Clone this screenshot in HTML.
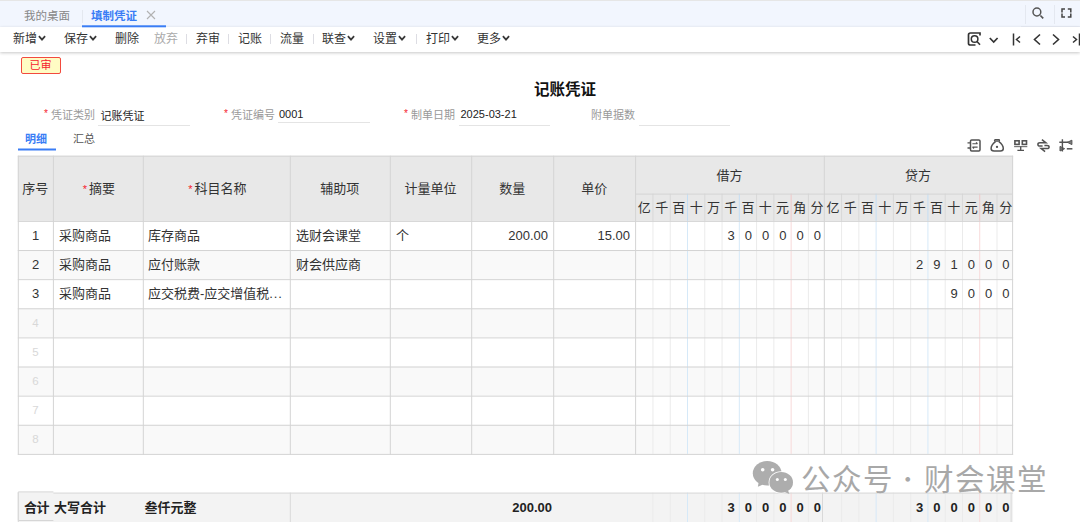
<!DOCTYPE html>
<html lang="zh-CN"><head><meta charset="utf-8"><title>填制凭证</title>
<style>
html,body{margin:0;padding:0;}
body{width:1080px;height:522px;overflow:hidden;position:relative;background:#fff;font-family:"Liberation Sans","Noto Sans CJK SC",sans-serif;color:#333;font-size:12px;}
.abs{position:absolute;white-space:nowrap;line-height:1;}
#tabbar{position:absolute;left:0;top:0;width:1080px;height:27px;background:#f2f6fe;}
#toolbar{position:absolute;left:0;top:27px;width:1080px;height:25px;background:#fff;box-shadow:0 1px 3px rgba(0,0,0,.22);}
.tb{position:absolute;top:33px;font-size:12px;line-height:13px;color:#333;white-space:nowrap;}
.sep{position:absolute;top:34px;width:1px;height:10px;background:#dddde3;}
.lbl{position:absolute;font-size:11px;line-height:12px;color:#999;white-space:nowrap;}
.val{position:absolute;font-size:11px;line-height:12px;color:#222;white-space:nowrap;}
.ul{position:absolute;height:1px;background:#e4e4e4;}
.red{color:#f5222d;}
#grid{position:absolute;left:0;top:0;}
.th{position:absolute;font-size:13px;line-height:14px;color:#333;text-align:center;white-space:nowrap;}
.td{position:absolute;font-size:13px;line-height:14px;color:#333;white-space:nowrap;}
.dg{position:absolute;font-size:13px;line-height:14px;color:#333;text-align:center;white-space:nowrap;}
.tot{font-weight:bold;color:#222;}
</style></head><body>

<div id="tabbar"></div>
<div class="abs" style="left:0;top:0;width:1080px;height:1px;background:#e6e6e6"></div>
<div class="abs" style="left:24px;top:9.5px;font-size:11.5px;line-height:13px;color:#888;">我的桌面</div>
<div class="abs" style="left:82px;top:10px;width:1px;height:13px;background:#e4e8ef;"></div>
<div class="abs" style="left:91px;top:9.5px;font-size:11.5px;line-height:13px;color:#3a7df5;font-weight:bold;">填制凭证</div>
<svg class="abs" style="left:146px;top:10px" width="10" height="10" viewBox="0 0 10 10"><path d="M1 1 L9 9 M9 1 L1 9" stroke="#b2b2b2" stroke-width="1.1" fill="none"/></svg>
<svg class="abs" style="left:82px;top:24px;z-index:3" width="84" height="4"><rect x="0" y="1.3" width="84" height="2" fill="#3a7df5"/></svg>
<div class="abs" style="left:1025px;top:5px;width:1px;height:19px;background:#e4e8f0;"></div>
<div class="abs" style="left:1054px;top:5px;width:1px;height:19px;background:#e4e8f0;"></div>
<div class="abs" style="left:1021px;top:26px;width:59px;height:1px;background:#e9edf6;"></div>
<svg class="abs" style="left:1031px;top:6px" width="14" height="14" viewBox="0 0 14 14"><circle cx="5.9" cy="6" r="3.9" stroke="#555" stroke-width="1.5" fill="none"/><path d="M9.4 9.5 L12.2 12.3" stroke="#555" stroke-width="1.7"/></svg>
<svg class="abs" style="left:1060px;top:7px" width="13" height="12" viewBox="0 0 13 12"><path d="M5 1.9 H2 V5.4 M2 6.5 V10 H5 M7.8 1.9 H10.8 V5.4 M10.8 6.5 V10 H7.8" stroke="#444" stroke-width="1.5" fill="none"/></svg>
<div id="toolbar"></div>
<div class="tb" style="left:13px;color:#333">新增</div>
<svg class="abs" style="left:38px;top:34.6px" width="8" height="7" viewBox="0 0 8 7"><path d="M0.9 1.2 L4 4.6 L7.1 1.2" stroke="#383838" stroke-width="1.75" fill="none"/></svg>
<div class="tb" style="left:64px;color:#333">保存</div>
<svg class="abs" style="left:89px;top:34.6px" width="8" height="7" viewBox="0 0 8 7"><path d="M0.9 1.2 L4 4.6 L7.1 1.2" stroke="#383838" stroke-width="1.75" fill="none"/></svg>
<div class="tb" style="left:115px;color:#333">删除</div>
<div class="tb" style="left:154px;color:#aaa">放弃</div>
<div class="tb" style="left:196px;color:#333">弃审</div>
<div class="tb" style="left:238px;color:#333">记账</div>
<div class="tb" style="left:280px;color:#333">流量</div>
<div class="tb" style="left:322px;color:#333">联查</div>
<svg class="abs" style="left:347px;top:34.6px" width="8" height="7" viewBox="0 0 8 7"><path d="M0.9 1.2 L4 4.6 L7.1 1.2" stroke="#383838" stroke-width="1.75" fill="none"/></svg>
<div class="tb" style="left:373px;color:#333">设置</div>
<svg class="abs" style="left:398px;top:34.6px" width="8" height="7" viewBox="0 0 8 7"><path d="M0.9 1.2 L4 4.6 L7.1 1.2" stroke="#383838" stroke-width="1.75" fill="none"/></svg>
<div class="tb" style="left:426px;color:#333">打印</div>
<svg class="abs" style="left:451px;top:34.6px" width="8" height="7" viewBox="0 0 8 7"><path d="M0.9 1.2 L4 4.6 L7.1 1.2" stroke="#383838" stroke-width="1.75" fill="none"/></svg>
<div class="tb" style="left:477px;color:#333">更多</div>
<svg class="abs" style="left:502px;top:34.6px" width="8" height="7" viewBox="0 0 8 7"><path d="M0.9 1.2 L4 4.6 L7.1 1.2" stroke="#383838" stroke-width="1.75" fill="none"/></svg>
<div class="sep" style="left:186px"></div>
<div class="sep" style="left:228px"></div>
<div class="sep" style="left:270px"></div>
<div class="sep" style="left:313px"></div>
<div class="sep" style="left:416px"></div>
<svg class="abs" style="left:967px;top:31px" width="15" height="16" viewBox="0 0 15 16"><path d="M13 4.6 V2 H3.5 Q1.5 2 1.5 4 V12.5 Q1.5 14 3.5 14 H8.5" stroke="#333" stroke-width="1.7" fill="none"/><circle cx="7.6" cy="8" r="3.3" stroke="#333" stroke-width="1.5" fill="none"/><path d="M10 10.5 L13 13.8" stroke="#333" stroke-width="1.6"/></svg>
<svg class="abs" style="left:989px;top:36.5px" width="10" height="7" viewBox="0 0 10 7"><path d="M0.8 1 L4.7 5 L8.6 1" stroke="#333" stroke-width="1.7" fill="none"/></svg>
<svg class="abs" style="left:1012px;top:33px" width="10" height="13" viewBox="0 0 10 13"><path d="M1.5 0.5 V12.5" stroke="#333" stroke-width="1.5"/><path d="M8 3.5 L4.5 6.5 L8 9.5" stroke="#333" stroke-width="1.5" fill="none"/></svg>
<svg class="abs" style="left:1032px;top:33px" width="10" height="13" viewBox="0 0 10 13"><path d="M8 1.5 L2.5 6.5 L8 11.5" stroke="#333" stroke-width="1.6" fill="none"/></svg>
<svg class="abs" style="left:1051px;top:33px" width="10" height="13" viewBox="0 0 10 13"><path d="M2 1.5 L7.5 6.5 L2 11.5" stroke="#333" stroke-width="1.6" fill="none"/></svg>
<svg class="abs" style="left:1070.5px;top:33px" width="10" height="13" viewBox="0 0 10 13"><path d="M2 3.5 L5.5 6.5 L2 9.5" stroke="#333" stroke-width="1.5" fill="none"/><path d="M8.5 0.5 V12.5" stroke="#333" stroke-width="1.5"/></svg>
<div class="abs" style="left:21px;top:57px;width:38px;height:15px;border:1px solid #f24a3e;border-radius:2px;background:#fffcc4;color:#f5222d;font-size:11px;line-height:15px;text-align:center;text-indent:-1px">已审</div>
<div class="abs" style="left:465px;top:81.6px;width:200px;text-align:center;font-size:15.5px;line-height:16px;font-weight:bold;color:#111;">记账凭证</div>
<div class="lbl red" style="left:44px;top:108px;font-size:10px">*</div>
<div class="lbl" style="left:51px;top:108.5px">凭证类别</div>
<div class="val" style="left:100.5px;top:109.5px">记账凭证</div>
<div class="ul" style="left:98px;top:125px;width:92px"></div>
<div class="lbl red" style="left:224px;top:108px;font-size:10px">*</div>
<div class="lbl" style="left:231px;top:108.5px">凭证编号</div>
<div class="val" style="left:279px;top:107.6px">0001</div>
<div class="ul" style="left:278px;top:122px;width:92px"></div>
<div class="lbl red" style="left:404px;top:108px;font-size:10px">*</div>
<div class="lbl" style="left:411px;top:108.5px">制单日期</div>
<div class="val" style="left:460.5px;top:108px">2025-03-21</div>
<div class="ul" style="left:459px;top:125px;width:91px"></div>
<div class="lbl" style="left:591px;top:108.5px">附单据数</div>
<div class="ul" style="left:639px;top:125px;width:91px"></div>
<div class="abs" style="left:25px;top:132.5px;font-size:11px;line-height:12px;color:#3a7df5;font-weight:bold;">明细</div>
<div class="abs" style="left:73px;top:132.5px;font-size:11px;line-height:12px;color:#555;">汇总</div>
<svg class="abs" style="left:967px;top:139px" width="15" height="14" viewBox="0 0 15 14" fill="none" stroke="#525252" stroke-width="1.5"><rect x="3.5" y="0.9" width="9.5" height="11" rx="1.2"/><path d="M0.5 3.8 H3.5 M0.5 9 H3.5" stroke-width="1.3"/><path d="M5.4 4.7 H10.6 M9 3.3 L10.6 4.7 M10.6 8.1 H5.4 M7 9.5 L5.4 8.1" stroke-width="1.1"/></svg>
<svg class="abs" style="left:990px;top:139px" width="15" height="14" viewBox="0 0 15 14" fill="none" stroke="#525252" stroke-width="1.5"><rect x="4.5" y="0.7" width="5" height="1.5" rx="0.7" stroke-width="1.3"/><path d="M5.5 2.6 C3 4.5 1.1 7 1.1 9.4 C1.1 11 2.2 11.9 4 11.9 H10.4 C12.2 11.9 13.3 11 13.3 9.4 C13.3 7 11.4 4.5 8.9 2.6"/><circle cx="7" cy="7.9" r="1.15" fill="#525252" stroke="none"/></svg>
<svg class="abs" style="left:1013.6px;top:139px" width="14" height="14" viewBox="0 0 14 14" fill="none" stroke="#525252" stroke-width="1.6"><rect x="0.9" y="1.8" width="4.2" height="3.6"/><rect x="8.3" y="1.8" width="4.2" height="3.6"/><path d="M0.1 7.6 H13.3" stroke-width="1.2" stroke="#777"/><path d="M6.7 7.6 V11.2 M3.4 11.4 H10" stroke-width="1.4"/></svg>
<svg class="abs" style="left:1037px;top:139px" width="14" height="14" viewBox="0 0 14 14" fill="none" stroke="#525252" stroke-width="1.5"><path d="M4.9 0.7 L8.9 3.8 H3 Q0.9 3.8 0.9 5.4 Q0.9 7 3 7 H5.6"/><path d="M8.1 12.7 L4.1 9.6 H10 Q12.1 9.6 12.1 8 Q12.1 6.4 10 6.4 H7.4"/></svg>
<svg class="abs" style="left:1059px;top:139px" width="15" height="14" viewBox="0 0 15 14" fill="none" stroke="#525252" stroke-width="1.4"><path d="M3.4 0.2 V12.6 M0.3 3.3 H9"/><path d="M8.4 3.3 L12.9 1.2 V5.6 Z" fill="#525252" stroke-width="1" fill-opacity="0.75"/><path d="M1 7.4 L5.6 9.7 L1 12 Z" fill="#525252" stroke-width="1" fill-opacity="0.75"/><path d="M7.8 9.8 H13.4" stroke-width="1.5"/></svg>
<svg id="grid" width="1080" height="522" viewBox="0 0 1080 522">
<rect x="18" y="148.5" width="38" height="2" fill="#3a7df5"/>
<rect x="17.8" y="155.7" width="995.3000000000001" height="65.20000000000002" fill="#e8e8e8"/>
<rect x="17.8" y="250.025" width="995.3000000000001" height="29.125" fill="#f9f9f9"/>
<rect x="17.8" y="308.275" width="995.3000000000001" height="29.125" fill="#f9f9f9"/>
<rect x="17.8" y="366.525" width="995.3000000000001" height="29.125" fill="#f9f9f9"/>
<rect x="17.8" y="424.775" width="995.3000000000001" height="29.125" fill="#f9f9f9"/>
<rect x="17.8" y="492.6" width="995.3000000000001" height="30" fill="#f3f3f3"/>
<rect x="652.47" y="193.60" width="1" height="27.30" fill="#d8d8d8"/>
<rect x="669.74" y="193.60" width="1" height="27.30" fill="#d8d8d8"/>
<rect x="687.01" y="193.60" width="1" height="27.30" fill="#c4def4"/>
<rect x="704.28" y="193.60" width="1" height="27.30" fill="#d8d8d8"/>
<rect x="721.55" y="193.60" width="1" height="27.30" fill="#d8d8d8"/>
<rect x="738.82" y="193.60" width="1" height="27.30" fill="#c4def4"/>
<rect x="756.09" y="193.60" width="1" height="27.30" fill="#d8d8d8"/>
<rect x="773.36" y="193.60" width="1" height="27.30" fill="#d8d8d8"/>
<rect x="790.63" y="193.60" width="1" height="27.30" fill="#f0c8c8"/>
<rect x="807.90" y="193.60" width="1" height="27.30" fill="#d8d8d8"/>
<rect x="841.07" y="193.60" width="1" height="27.30" fill="#d8d8d8"/>
<rect x="858.34" y="193.60" width="1" height="27.30" fill="#d8d8d8"/>
<rect x="875.61" y="193.60" width="1" height="27.30" fill="#c4def4"/>
<rect x="892.88" y="193.60" width="1" height="27.30" fill="#d8d8d8"/>
<rect x="910.15" y="193.60" width="1" height="27.30" fill="#d8d8d8"/>
<rect x="927.42" y="193.60" width="1" height="27.30" fill="#c4def4"/>
<rect x="944.69" y="193.60" width="1" height="27.30" fill="#d8d8d8"/>
<rect x="961.96" y="193.60" width="1" height="27.30" fill="#d8d8d8"/>
<rect x="979.23" y="193.60" width="1" height="27.30" fill="#f0c8c8"/>
<rect x="996.50" y="193.60" width="1" height="27.30" fill="#d8d8d8"/>
<rect x="652.47" y="220.90" width="1" height="233.00" fill="#ebebeb"/>
<rect x="669.74" y="220.90" width="1" height="233.00" fill="#ebebeb"/>
<rect x="687.01" y="220.90" width="1" height="233.00" fill="#d6e9f8"/>
<rect x="704.28" y="220.90" width="1" height="233.00" fill="#ebebeb"/>
<rect x="721.55" y="220.90" width="1" height="233.00" fill="#ebebeb"/>
<rect x="738.82" y="220.90" width="1" height="233.00" fill="#d6e9f8"/>
<rect x="756.09" y="220.90" width="1" height="233.00" fill="#ebebeb"/>
<rect x="773.36" y="220.90" width="1" height="233.00" fill="#ebebeb"/>
<rect x="790.63" y="220.90" width="1" height="233.00" fill="#f8dada"/>
<rect x="807.90" y="220.90" width="1" height="233.00" fill="#ebebeb"/>
<rect x="841.07" y="220.90" width="1" height="233.00" fill="#ebebeb"/>
<rect x="858.34" y="220.90" width="1" height="233.00" fill="#ebebeb"/>
<rect x="875.61" y="220.90" width="1" height="233.00" fill="#d6e9f8"/>
<rect x="892.88" y="220.90" width="1" height="233.00" fill="#ebebeb"/>
<rect x="910.15" y="220.90" width="1" height="233.00" fill="#ebebeb"/>
<rect x="927.42" y="220.90" width="1" height="233.00" fill="#d6e9f8"/>
<rect x="944.69" y="220.90" width="1" height="233.00" fill="#ebebeb"/>
<rect x="961.96" y="220.90" width="1" height="233.00" fill="#ebebeb"/>
<rect x="979.23" y="220.90" width="1" height="233.00" fill="#f8dada"/>
<rect x="996.50" y="220.90" width="1" height="233.00" fill="#ebebeb"/>
<rect x="652.47" y="492.60" width="1" height="29.40" fill="#ebebeb"/>
<rect x="669.74" y="492.60" width="1" height="29.40" fill="#ebebeb"/>
<rect x="687.01" y="492.60" width="1" height="29.40" fill="#d6e9f8"/>
<rect x="704.28" y="492.60" width="1" height="29.40" fill="#ebebeb"/>
<rect x="721.55" y="492.60" width="1" height="29.40" fill="#ebebeb"/>
<rect x="738.82" y="492.60" width="1" height="29.40" fill="#d6e9f8"/>
<rect x="756.09" y="492.60" width="1" height="29.40" fill="#ebebeb"/>
<rect x="773.36" y="492.60" width="1" height="29.40" fill="#ebebeb"/>
<rect x="790.63" y="492.60" width="1" height="29.40" fill="#f8dada"/>
<rect x="807.90" y="492.60" width="1" height="29.40" fill="#ebebeb"/>
<rect x="841.07" y="492.60" width="1" height="29.40" fill="#ebebeb"/>
<rect x="858.34" y="492.60" width="1" height="29.40" fill="#ebebeb"/>
<rect x="875.61" y="492.60" width="1" height="29.40" fill="#d6e9f8"/>
<rect x="892.88" y="492.60" width="1" height="29.40" fill="#ebebeb"/>
<rect x="910.15" y="492.60" width="1" height="29.40" fill="#ebebeb"/>
<rect x="927.42" y="492.60" width="1" height="29.40" fill="#d6e9f8"/>
<rect x="944.69" y="492.60" width="1" height="29.40" fill="#ebebeb"/>
<rect x="961.96" y="492.60" width="1" height="29.40" fill="#ebebeb"/>
<rect x="979.23" y="492.60" width="1" height="29.40" fill="#f8dada"/>
<rect x="996.50" y="492.60" width="1" height="29.40" fill="#ebebeb"/>
<rect x="17.8" y="155.700" width="995.3000000000001" height="1" fill="#d4d4d4"/>
<rect x="17.8" y="220.900" width="995.3000000000001" height="1" fill="#d4d4d4"/>
<rect x="17.8" y="250.025" width="995.3000000000001" height="1" fill="#d4d4d4"/>
<rect x="17.8" y="279.150" width="995.3000000000001" height="1" fill="#d4d4d4"/>
<rect x="17.8" y="308.275" width="995.3000000000001" height="1" fill="#d4d4d4"/>
<rect x="17.8" y="337.400" width="995.3000000000001" height="1" fill="#d4d4d4"/>
<rect x="17.8" y="366.525" width="995.3000000000001" height="1" fill="#d4d4d4"/>
<rect x="17.8" y="395.650" width="995.3000000000001" height="1" fill="#d4d4d4"/>
<rect x="17.8" y="424.775" width="995.3000000000001" height="1" fill="#d4d4d4"/>
<rect x="17.8" y="453.900" width="995.3000000000001" height="1" fill="#d4d4d4"/>
<rect x="635.2" y="193.6" width="376.9" height="1" fill="#d4d4d4"/>
<rect x="17.8" y="155.7" width="1" height="299.200" fill="#d4d4d4"/>
<rect x="52.9" y="155.7" width="1" height="299.200" fill="#d4d4d4"/>
<rect x="142.8" y="155.7" width="1" height="299.200" fill="#d4d4d4"/>
<rect x="289.8" y="155.7" width="1" height="299.200" fill="#d4d4d4"/>
<rect x="389.8" y="155.7" width="1" height="299.200" fill="#d4d4d4"/>
<rect x="471.2" y="155.7" width="1" height="299.200" fill="#d4d4d4"/>
<rect x="553.2" y="155.7" width="1" height="299.200" fill="#d4d4d4"/>
<rect x="635.1" y="155.7" width="1" height="299.200" fill="#d4d4d4"/>
<rect x="823.8" y="155.7" width="1" height="299.200" fill="#d4d4d4"/>
<rect x="1012.1" y="155.7" width="1" height="299.200" fill="#d4d4d4"/>
<rect x="17.8" y="492.6" width="995.3000000000001" height="1" fill="#d9d9d9"/>
<rect x="17.8" y="492.6" width="1" height="30" fill="#d9d9d9"/>
<rect x="289.8" y="492.6" width="1" height="30" fill="#d9d9d9"/>
<rect x="822.0" y="492.6" width="1" height="30" fill="#d9d9d9"/>
<rect x="1010.6" y="492.6" width="1" height="30" fill="#d9d9d9"/>
<path d="M53.4 491.90000000000003 H18.3 V520.5 H53.4" fill="#f3f3f3" stroke="#d6d6d6" stroke-width="1"/>
</svg>
<div class="th" style="left:17.8px;top:182px;width:35.1px">序号</div>
<div class="th" style="left:52.9px;top:182px;width:89.9px"><span class="red" style="font-size:11px;margin:0 2px">*</span>摘要</div>
<div class="th" style="left:142.8px;top:182px;width:147.0px"><span class="red" style="font-size:11px;margin:0 2px">*</span>科目名称</div>
<div class="th" style="left:289.8px;top:182px;width:100.0px">辅助项</div>
<div class="th" style="left:389.8px;top:182px;width:81.4px">计量单位</div>
<div class="th" style="left:471.2px;top:182px;width:82.0px">数量</div>
<div class="th" style="left:553.2px;top:182px;width:81.9px">单价</div>
<div class="th" style="left:635.2px;top:169px;width:188.6px">借方</div>
<div class="th" style="left:823.8px;top:169px;width:188.3px">贷方</div>
<div class="dg" style="left:635.7px;top:201px;width:17.3px">亿</div>
<div class="dg" style="left:653.0px;top:201px;width:17.3px">千</div>
<div class="dg" style="left:670.2px;top:201px;width:17.3px">百</div>
<div class="dg" style="left:687.5px;top:201px;width:17.3px">十</div>
<div class="dg" style="left:704.8px;top:201px;width:17.3px">万</div>
<div class="dg" style="left:722.1px;top:201px;width:17.3px">千</div>
<div class="dg" style="left:739.3px;top:201px;width:17.3px">百</div>
<div class="dg" style="left:756.6px;top:201px;width:17.3px">十</div>
<div class="dg" style="left:773.9px;top:201px;width:17.3px">元</div>
<div class="dg" style="left:791.1px;top:201px;width:17.3px">角</div>
<div class="dg" style="left:808.4px;top:201px;width:17.3px">分</div>
<div class="dg" style="left:824.3px;top:201px;width:17.3px">亿</div>
<div class="dg" style="left:841.6px;top:201px;width:17.3px">千</div>
<div class="dg" style="left:858.8px;top:201px;width:17.3px">百</div>
<div class="dg" style="left:876.1px;top:201px;width:17.3px">十</div>
<div class="dg" style="left:893.4px;top:201px;width:17.3px">万</div>
<div class="dg" style="left:910.6px;top:201px;width:17.3px">千</div>
<div class="dg" style="left:927.9px;top:201px;width:17.3px">百</div>
<div class="dg" style="left:945.2px;top:201px;width:17.3px">十</div>
<div class="dg" style="left:962.5px;top:201px;width:17.3px">元</div>
<div class="dg" style="left:979.7px;top:201px;width:17.3px">角</div>
<div class="dg" style="left:997.0px;top:201px;width:17.3px">分</div>
<div class="td" style="left:18px;width:35px;text-align:center;top:229px">1</div>
<div class="td" style="left:59px;top:229px">采购商品</div>
<div class="td" style="left:148px;top:229px">库存商品</div>
<div class="td" style="left:296px;top:229px">选财会课堂</div>
<div class="td" style="left:396px;top:229px">个</div>
<div class="td" style="left:472px;width:76px;text-align:right;top:229px">200.00</div>
<div class="td" style="left:554px;width:76px;text-align:right;top:229px">15.00</div>
<div class="dg" style="left:722.4px;top:229px;width:17.3px">3</div>
<div class="dg" style="left:739.6px;top:229px;width:17.3px">0</div>
<div class="dg" style="left:756.9px;top:229px;width:17.3px">0</div>
<div class="dg" style="left:774.2px;top:229px;width:17.3px">0</div>
<div class="dg" style="left:791.4px;top:229px;width:17.3px">0</div>
<div class="dg" style="left:808.7px;top:229px;width:17.3px">0</div>
<div class="td" style="left:18px;width:35px;text-align:center;top:258px">2</div>
<div class="td" style="left:59px;top:258px">采购商品</div>
<div class="td" style="left:148px;top:258px">应付账款</div>
<div class="td" style="left:296px;top:258px">财会供应商</div>
<div class="dg" style="left:910.9px;top:258px;width:17.3px">2</div>
<div class="dg" style="left:928.2px;top:258px;width:17.3px">9</div>
<div class="dg" style="left:945.5px;top:258px;width:17.3px">1</div>
<div class="dg" style="left:962.8px;top:258px;width:17.3px">0</div>
<div class="dg" style="left:980.0px;top:258px;width:17.3px">0</div>
<div class="dg" style="left:997.3px;top:258px;width:17.3px">0</div>
<div class="td" style="left:18px;width:35px;text-align:center;top:287px">3</div>
<div class="td" style="left:59px;top:287px">采购商品</div>
<div class="td" style="left:148px;top:287px">应交税费-应交增值税<span style="letter-spacing:0.8px">...</span></div>
<div class="dg" style="left:945.5px;top:287px;width:17.3px">9</div>
<div class="dg" style="left:962.8px;top:287px;width:17.3px">0</div>
<div class="dg" style="left:980.0px;top:287px;width:17.3px">0</div>
<div class="dg" style="left:997.3px;top:287px;width:17.3px">0</div>
<div class="td" style="left:18px;width:35px;text-align:center;top:316px;color:#d8d8d8;font-size:11.5px">4</div>
<div class="td" style="left:18px;width:35px;text-align:center;top:345px;color:#d8d8d8;font-size:11.5px">5</div>
<div class="td" style="left:18px;width:35px;text-align:center;top:374px;color:#d8d8d8;font-size:11.5px">6</div>
<div class="td" style="left:18px;width:35px;text-align:center;top:403px;color:#d8d8d8;font-size:11.5px">7</div>
<div class="td" style="left:18px;width:35px;text-align:center;top:432px;color:#d8d8d8;font-size:11.5px">8</div>
<div class="td tot" style="left:24px;top:501px;letter-spacing:-0.6px">合计</div>
<div class="td tot" style="left:54px;top:501px">大写合计</div>
<div class="td tot" style="left:144.5px;top:501px">叁仟元整</div>
<div class="td tot" style="left:472px;width:80px;text-align:right;top:501px">200.00</div>
<div class="dg tot" style="left:722.4px;top:501px;width:17.3px">3</div>
<div class="dg tot" style="left:739.6px;top:501px;width:17.3px">0</div>
<div class="dg tot" style="left:756.9px;top:501px;width:17.3px">0</div>
<div class="dg tot" style="left:774.2px;top:501px;width:17.3px">0</div>
<div class="dg tot" style="left:791.4px;top:501px;width:17.3px">0</div>
<div class="dg tot" style="left:808.7px;top:501px;width:17.3px">0</div>
<div class="dg tot" style="left:910.9px;top:501px;width:17.3px">3</div>
<div class="dg tot" style="left:928.2px;top:501px;width:17.3px">0</div>
<div class="dg tot" style="left:945.5px;top:501px;width:17.3px">0</div>
<div class="dg tot" style="left:962.8px;top:501px;width:17.3px">0</div>
<div class="dg tot" style="left:980.0px;top:501px;width:17.3px">0</div>
<div class="dg tot" style="left:997.3px;top:501px;width:17.3px">0</div>
<svg class="abs" style="left:750px;top:458px" width="50" height="46" viewBox="0 0 50 46"><ellipse cx="17.2" cy="15.3" rx="14.4" ry="12.3" fill="#adadad"/><path d="M8.6 24.5 L7.9 28.7 L13 26.6 Z" fill="#adadad"/><ellipse cx="31.2" cy="24.4" rx="12.6" ry="11.2" fill="#fff"/><ellipse cx="31.2" cy="24.4" rx="11.8" ry="10.4" fill="#adadad"/><path d="M34.5 34 L39.4 35.9 L38 32.5 Z" fill="#adadad"/><circle cx="12.7" cy="11.7" r="1.8" fill="#fff"/><circle cx="22.6" cy="11.7" r="1.8" fill="#fff"/><circle cx="27.3" cy="21.6" r="1.5" fill="#fff"/><circle cx="35.3" cy="21.6" r="1.5" fill="#fff"/></svg>
<div class="abs" id="wm" style="left:801px;top:462.5px;font-size:29.5px;line-height:34px;color:#a8a8a8;letter-spacing:1.5px;">公众号<span id="wmdot" style="font-family:'Noto Sans CJK SC',sans-serif;font-size:22px;position:relative;top:-2.8px;letter-spacing:0;word-spacing:-4.4px;margin:0 4.8px 0 2.2px"> · </span>财会课堂</div>
</body></html>
